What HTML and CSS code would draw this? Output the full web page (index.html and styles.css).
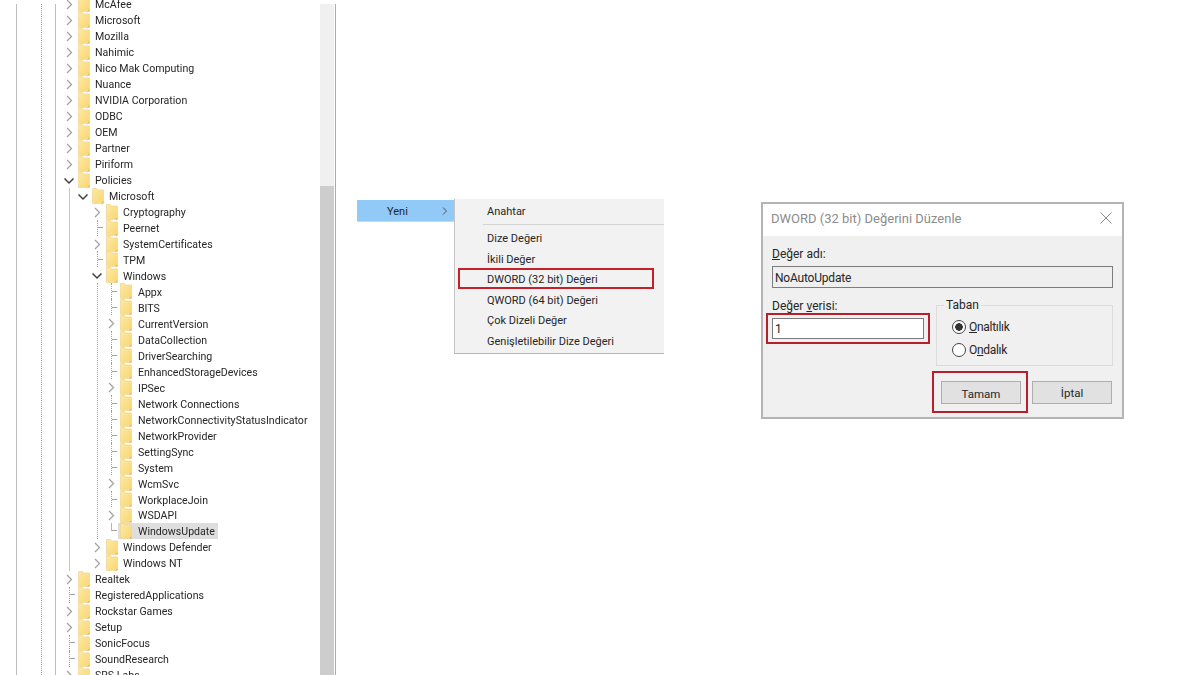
FILE: index.html
```html
<!DOCTYPE html>
<html lang="tr">
<head>
<meta charset="utf-8">
<title>Kayıt Defteri</title>
<link rel="stylesheet" href="styles.css">
</head>
<body>
<svg class="defs" width="0" height="0" aria-hidden="true">
  <defs>
    <linearGradient id="fg" x1="0" y1="0" x2="1" y2="1"><stop offset="0" stop-color="#fde9a6"/><stop offset="1" stop-color="#f9d670"/></linearGradient>
    <symbol id="folder" viewBox="0 0 12 16"><path d="M0.500 0.500h4l1 1.500h6v12l-1.500 1.500h-9.500z" fill="url(#fg)" stroke="#eed592" stroke-width=".7"/><path d="M9.500 15.500l2-2v2z" fill="#c9a24e"/></symbol>
    <symbol id="cr" viewBox="0 0 14 16"><path d="M5 4l4.500 4.500L5 13" fill="none" stroke="#a3a3a3" stroke-width="1.300"/></symbol>
    <symbol id="cd" viewBox="0 0 14 16"><path d="M2.500 6.500l4.500 4.500 4.500-4.500" fill="none" stroke="#404040" stroke-width="1.500"/></symbol>
  </defs>
</svg>
<div class="page">
  <aside class="panel">
    <div class="rail rail-a"></div>
    <div class="rail rail-b"></div>
    <div class="rail rail-c"></div>
    <div class="tree">
      <div class="row"><svg class="chev"><use href="#cr"/></svg><span class="item"><svg class="fold"><use href="#folder"/></svg><span class="name">McAfee</span></span></div>
      <div class="row"><svg class="chev"><use href="#cr"/></svg><span class="item"><svg class="fold"><use href="#folder"/></svg><span class="name">Microsoft</span></span></div>
      <div class="row"><svg class="chev"><use href="#cr"/></svg><span class="item"><svg class="fold"><use href="#folder"/></svg><span class="name">Mozilla</span></span></div>
      <div class="row"><svg class="chev"><use href="#cr"/></svg><span class="item"><svg class="fold"><use href="#folder"/></svg><span class="name">Nahimic</span></span></div>
      <div class="row"><svg class="chev"><use href="#cr"/></svg><span class="item"><svg class="fold"><use href="#folder"/></svg><span class="name">Nico Mak Computing</span></span></div>
      <div class="row"><svg class="chev"><use href="#cr"/></svg><span class="item"><svg class="fold"><use href="#folder"/></svg><span class="name">Nuance</span></span></div>
      <div class="row"><svg class="chev"><use href="#cr"/></svg><span class="item"><svg class="fold"><use href="#folder"/></svg><span class="name">NVIDIA Corporation</span></span></div>
      <div class="row"><svg class="chev"><use href="#cr"/></svg><span class="item"><svg class="fold"><use href="#folder"/></svg><span class="name">ODBC</span></span></div>
      <div class="row"><svg class="chev"><use href="#cr"/></svg><span class="item"><svg class="fold"><use href="#folder"/></svg><span class="name">OEM</span></span></div>
      <div class="row"><svg class="chev"><use href="#cr"/></svg><span class="item"><svg class="fold"><use href="#folder"/></svg><span class="name">Partner</span></span></div>
      <div class="row"><svg class="chev"><use href="#cr"/></svg><span class="item"><svg class="fold"><use href="#folder"/></svg><span class="name">Piriform</span></span></div>
      <div class="row"><svg class="chev"><use href="#cd"/></svg><span class="item"><svg class="fold"><use href="#folder"/></svg><span class="name">Policies</span></span></div>
      <div class="group group-solid">
        <div class="row"><svg class="chev"><use href="#cd"/></svg><span class="item"><svg class="fold"><use href="#folder"/></svg><span class="name">Microsoft</span></span></div>
        <div class="group">
          <div class="row"><svg class="chev"><use href="#cr"/></svg><span class="item"><svg class="fold"><use href="#folder"/></svg><span class="name">Cryptography</span></span></div>
          <div class="row"><span class="stub"></span><span class="item"><svg class="fold"><use href="#folder"/></svg><span class="name">Peernet</span></span></div>
          <div class="row"><svg class="chev"><use href="#cr"/></svg><span class="item"><svg class="fold"><use href="#folder"/></svg><span class="name">SystemCertificates</span></span></div>
          <div class="row"><span class="stub"></span><span class="item"><svg class="fold"><use href="#folder"/></svg><span class="name">TPM</span></span></div>
          <div class="row"><svg class="chev"><use href="#cd"/></svg><span class="item"><svg class="fold"><use href="#folder"/></svg><span class="name">Windows</span></span></div>
          <div class="group group-dotted">
            <div class="row"><span class="stub"></span><span class="item"><svg class="fold"><use href="#folder"/></svg><span class="name">Appx</span></span></div>
            <div class="row"><span class="stub"></span><span class="item"><svg class="fold"><use href="#folder"/></svg><span class="name">BITS</span></span></div>
            <div class="row"><svg class="chev"><use href="#cr"/></svg><span class="item"><svg class="fold"><use href="#folder"/></svg><span class="name">CurrentVersion</span></span></div>
            <div class="row"><span class="stub"></span><span class="item"><svg class="fold"><use href="#folder"/></svg><span class="name">DataCollection</span></span></div>
            <div class="row"><span class="stub"></span><span class="item"><svg class="fold"><use href="#folder"/></svg><span class="name">DriverSearching</span></span></div>
            <div class="row"><span class="stub"></span><span class="item"><svg class="fold"><use href="#folder"/></svg><span class="name">EnhancedStorageDevices</span></span></div>
            <div class="row"><svg class="chev"><use href="#cr"/></svg><span class="item"><svg class="fold"><use href="#folder"/></svg><span class="name">IPSec</span></span></div>
            <div class="row"><span class="stub"></span><span class="item"><svg class="fold"><use href="#folder"/></svg><span class="name">Network Connections</span></span></div>
            <div class="row"><span class="stub"></span><span class="item"><svg class="fold"><use href="#folder"/></svg><span class="name">NetworkConnectivityStatusIndicator</span></span></div>
            <div class="row"><span class="stub"></span><span class="item"><svg class="fold"><use href="#folder"/></svg><span class="name">NetworkProvider</span></span></div>
            <div class="row"><span class="stub"></span><span class="item"><svg class="fold"><use href="#folder"/></svg><span class="name">SettingSync</span></span></div>
            <div class="row"><span class="stub"></span><span class="item"><svg class="fold"><use href="#folder"/></svg><span class="name">System</span></span></div>
            <div class="row"><svg class="chev"><use href="#cr"/></svg><span class="item"><svg class="fold"><use href="#folder"/></svg><span class="name">WcmSvc</span></span></div>
            <div class="row"><span class="stub"></span><span class="item"><svg class="fold"><use href="#folder"/></svg><span class="name">WorkplaceJoin</span></span></div>
            <div class="row"><svg class="chev"><use href="#cr"/></svg><span class="item"><svg class="fold"><use href="#folder"/></svg><span class="name">WSDAPI</span></span></div>
            <div class="row"><span class="stub stub-last"></span><span class="item item-selected"><svg class="fold"><use href="#folder"/></svg><span class="name">WindowsUpdate</span></span></div>
          </div>
          <div class="row"><svg class="chev"><use href="#cr"/></svg><span class="item"><svg class="fold"><use href="#folder"/></svg><span class="name">Windows Defender</span></span></div>
          <div class="row"><svg class="chev"><use href="#cr"/></svg><span class="item"><svg class="fold"><use href="#folder"/></svg><span class="name">Windows NT</span></span></div>
        </div>
      </div>
      <div class="row"><svg class="chev"><use href="#cr"/></svg><span class="item"><svg class="fold"><use href="#folder"/></svg><span class="name">Realtek</span></span></div>
      <div class="row"><span class="stub"></span><span class="item"><svg class="fold"><use href="#folder"/></svg><span class="name">RegisteredApplications</span></span></div>
      <div class="row"><svg class="chev"><use href="#cr"/></svg><span class="item"><svg class="fold"><use href="#folder"/></svg><span class="name">Rockstar Games</span></span></div>
      <div class="row"><svg class="chev"><use href="#cr"/></svg><span class="item"><svg class="fold"><use href="#folder"/></svg><span class="name">Setup</span></span></div>
      <div class="row"><span class="stub"></span><span class="item"><svg class="fold"><use href="#folder"/></svg><span class="name">SonicFocus</span></span></div>
      <div class="row"><span class="stub"></span><span class="item"><svg class="fold"><use href="#folder"/></svg><span class="name">SoundResearch</span></span></div>
      <div class="row"><svg class="chev"><use href="#cr"/></svg><span class="item"><svg class="fold"><use href="#folder"/></svg><span class="name">SRS Labs</span></span></div>
    </div>
    <div class="scrollbar"><div class="thumb"></div></div>
  </aside>

  <main class="stage">
    <section class="menu">
      <div class="menu-parent"><span>Yeni</span><svg class="menu-arrow" viewBox="0 0 8 10"><path d="M2 1.500L5.500 5 2 8.500" fill="none" stroke="#555" stroke-width="1"/></svg></div>
      <div class="submenu">
        <div class="mi">Anahtar</div>
        <div class="sep"></div>
        <div class="mi">Dize Değeri</div>
        <div class="mi">İkili Değer</div>
        <div class="mi mi-marked">DWORD (32 bit) Değeri</div>
        <div class="mi">QWORD (64 bit) Değeri</div>
        <div class="mi">Çok Dizeli Değer</div>
        <div class="mi">Genişletilebilir Dize Değeri</div>
      </div>
    </section>

    <section class="dialog">
      <header class="titlebar">
        <span>DWORD (32 bit) Değerini Düzenle</span>
        <svg class="close" viewBox="0 0 12 12"><path d="M.5.500l11 11M11.500.500l-11 11" stroke="#8a8a8a" stroke-width="1" fill="none"/></svg>
      </header>
      <div class="dlg-body">
        <div class="lbl"><u>D</u>eğer adı:</div>
        <div class="input input-ro">NoAutoUpdate</div>
        <div class="cols">
          <div class="col-left">
            <div class="lbl lbl-low">Değer <u>v</u>erisi:</div>
            <div class="marker marker-input"><div class="input input-val">1</div></div>
          </div>
          <fieldset class="base">
            <legend>Taban</legend>
            <div class="radio-row"><span class="radio radio-on"></span><span><u>O</u>naltılık</span></div>
            <div class="radio-row"><span class="radio"></span><span>O<u>n</u>dalık</span></div>
          </fieldset>
        </div>
        <div class="actions">
          <div class="marker marker-btn"><div class="btn">Tamam</div></div>
          <div class="btn">İptal</div>
        </div>
      </div>
    </section>
  </main>
</div>
</body>
</html>
```
FILE: styles.css
```css
* { box-sizing: border-box; }
html, body { margin: 0; height: 100%; background: #fff; }
body { overflow: hidden; font-family: Roboto, "Noto Sans", sans-serif; color: #262626; }
.defs { display: block; height: 0; }
.page { display: flex; width: 1200px; height: 675px; overflow: hidden; filter: blur(0.35px); }

/* left tree panel */
.panel { display: flex; width: 336px; height: 675px; padding-left: 16px; flex: none; overflow: hidden; }
.rail { margin-top: 4px; flex: none; border-left: 1px solid #bdbdbd; }
.rail-a { width: 25px; }
.rail-b { width: 14px; border-left: 1px dotted #9a9a9a; }
.rail-c { width: 7px; }
.tree { width: 257px; flex: none; margin-top: -4px; font-size: 10.6px; }
.row { display: flex; align-items: center; height: 15.975px; white-space: nowrap; }
.chev { width: 14px; height: 16px; flex: none; }
.stub {
  width: 7px; height: 16px; margin-left: 7px; flex: none;
  border-left: 1px dotted #a0a0a0;
  background: linear-gradient(#a0a0a0, #a0a0a0) no-repeat 0 50% / 5px 1px;
}
.stub-last { height: 8px; margin-bottom: 8px; border-left: 1px solid #b5b5b5; background-position: 0 100%; }
.item { display: flex; align-items: center; gap: 5px; height: 16px; padding: 0 3px 0 2px; }
.item-selected { background: #dedede; }
.fold { width: 12px; height: 16px; flex: none; }
.name { padding-top: 2px; }
.group { margin-left: 7px; padding-left: 6px; border-left: 1px solid transparent; }
.group-solid { border-left-color: #c4c4c4; }
.group-dotted { border-left: 1px dotted #a8a8a8; }
.group-dotted .item { gap: 6px; }
.scrollbar { width: 14px; margin: 4px 0 0 1px; flex: none; background: #f0f0f0; }
.thumb { height: 490px; margin-top: 182px; background: #cdcdcd; }
.panel::after { content: ""; width: 2px; margin: 4px 0 0 1px; flex: none; background: #ababab; }

/* stage */
.stage { display: flex; align-items: flex-start; flex: 1; font-size: 11px; }

/* context menu */
.menu { display: flex; align-items: flex-start; margin: 199px 0 0 21px; flex: none; }
.menu-parent {
  display: flex; align-items: center; width: 97px; height: 22px; margin-top: 1px; padding: 1px 0 0 30px;
  background: #91c9f7; border-bottom: 1px solid #d5d5d5;
}
.menu-arrow { width: 8px; height: 10px; margin-left: 33px; }
.submenu {
  width: 210px; height: 155px; padding-top: 1px;
  background: #f2f2f2; border-left: 1px solid #c4c4c4; border-bottom: 1px solid #b8b8b8;
}
.mi {
  display: flex; align-items: center; height: 20.6px; margin: 0 10px 0 3px; padding: 2px 0 0 27px;
  border: 2px solid transparent; white-space: nowrap;
}
.mi-marked { border-color: #c4202a; }
.sep { height: 1px; margin: 3px 0 2.6px 28px; background: #d4d4d4; }

/* dialog */
.dialog {
  width: 363px; height: 217px; margin: 202px 0 0 97px; flex: none;
  background: #f0f0f0; border: 2px solid #b4b4b4; font-size: 12px;
}
.titlebar {
  display: flex; align-items: center; justify-content: space-between; height: 32px; padding: 0 10px 4px 8px;
  background: #fff; color: #8c8c8c; font-size: 13px;
}
.close { width: 12px; height: 12px; }
.dlg-body { padding: 10px 9px 4px 9px; }
.lbl { height: 16px; line-height: 16px; white-space: nowrap; }
.lbl-low { line-height: 18px; }
.input { display: flex; align-items: center; border: 1px solid #7c7c7c; padding-left: 2px; }
.input-ro { height: 22px; margin-top: 4px; padding-top: 2px; background: #efefef; letter-spacing: -0.2px; }
.input-val { height: 21px; background: #fff; }
.cols { display: flex; gap: 12px; margin-top: 9px; }
.col-left { width: 152px; flex: none; }
.marker { border: 2px solid #b5202c; }
.marker-input { width: 164px; margin-left: -6px; padding: 3px 4px; }
.base {
  width: 177px; height: 69px; margin: 0; padding: 2px 0 0 15px; min-width: 0;
  border: 1px solid #dcdcdc;
}
.base legend { margin-left: -8px; padding: 0 2px; line-height: 16px; }
.radio-row { display: flex; align-items: center; gap: 3px; height: 23px; letter-spacing: -0.3px; }
.radio { width: 14px; height: 14px; flex: none; border: 1px solid #444; border-radius: 50%; background: #fff; }
.radio-on { background: radial-gradient(circle, #333 0 3.5px, #fff 4px); }
.actions { display: flex; align-items: center; justify-content: flex-end; gap: 4px; margin: 5px 0 0; padding-right: 1px; }
.marker-btn { padding: 8px 5px 7px 7px; }
.btn {
  display: flex; align-items: center; justify-content: center; width: 80px; height: 23px; padding-top: 2px;
  background: #e1e1e1; border: 1px solid #adadad; font-size: 11.5px;
}
```
